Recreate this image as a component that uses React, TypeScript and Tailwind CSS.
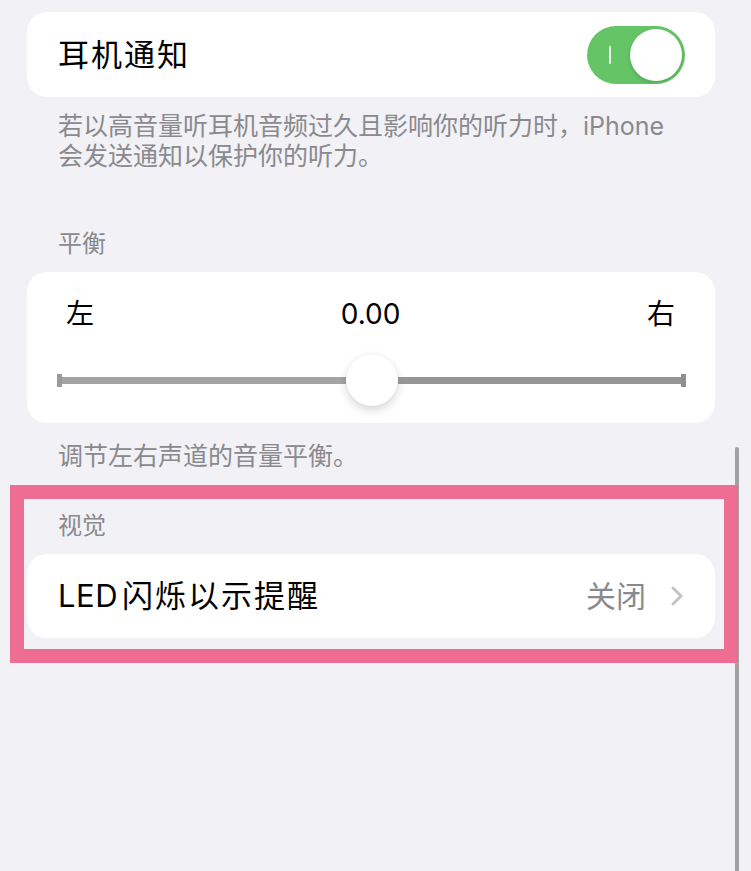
import React from "react";

const font = { fontFamily: '"Inter", "Noto Sans CJK SC", sans-serif' };

export default function App() {
  return (
    <div
      className="relative w-[751px] h-[871px] overflow-hidden bg-[#f1f1f6] text-black"
      style={font}
    >
      <div className="flex flex-col w-[688px] ml-[27px] pt-[12px]">
        {/* Card 1 */}
        <div className="flex h-[85px] items-center justify-between rounded-[20px] bg-white pl-[31px] pr-[30px]">
          <span className="text-[31px] leading-[36px] tracking-[2px]">耳机通知</span>
          <div className="relative flex h-[58px] w-[98px] items-center justify-end rounded-full bg-[#65c466] pr-[3px]">
            <div className="absolute left-[22px] top-[20px] h-[18px] w-[2px] rounded bg-white/90" />
            <div className="h-[52px] w-[52px] rounded-full bg-white shadow-[0_2px_4px_rgba(0,0,0,0.15)]" />
          </div>
        </div>
        <p className="mt-[14px] pl-[31px] text-[25px] leading-[30px] text-[#8a8a8e]">
          若以高音量听耳机音频过久且影响你的听力时，iPhone
          <br />
          会发送通知以保护你的听力。
        </p>

        <div className="mt-[58px] pl-[31px] text-[24px] leading-[30px] text-[#8a8a8e]">平衡</div>

        {/* Card 2 */}
        <div className="mt-[13px] flex h-[151px] flex-col rounded-[20px] bg-white pt-[25px]">
          <div className="flex items-center justify-between pl-[39px] pr-[40px] text-[28px] leading-[34px]">
            <span>左</span>
            <span className="text-[28px]">0.00</span>
            <span>右</span>
          </div>
          <div className="mt-[23px] flex h-[52px] items-center pl-[30px] pr-[29px]">
            <div className="h-[13px] w-[5px] bg-[#9a9a9a]" />
            <div className="h-[7px] flex-1 bg-[#a4a4a4]" />
            <div className="h-[52px] w-[52px] rounded-full bg-white shadow-[0_4px_10px_rgba(0,0,0,0.16),0_0_1px_rgba(0,0,0,0.1)]" />
            <div className="h-[7px] flex-1 bg-[#959595]" />
            <div className="h-[13px] w-[5px] bg-[#8f8f8f]" />
          </div>
        </div>
        <p className="mt-[18px] pl-[31px] text-[25px] leading-[30px] text-[#8a8a8e]">
          调节左右声道的音量平衡。
        </p>

        <div className="mt-[40px] pl-[31px] text-[24px] leading-[30px] text-[#8a8a8e]">视觉</div>

        {/* Card 3 */}
        <div className="mt-[13px] flex h-[84px] items-center justify-between rounded-[20px] bg-white pl-[31px] pr-[32px]">
          <span className="text-[31px] leading-[36px]">
            <span className="mr-[4px] tracking-[0.5px]">LED</span>
            <span className="tracking-[2px]">闪烁以示提醒</span>
          </span>
          <div className="flex items-center gap-[25px]">
            <span className="text-[30px] leading-[36px] text-[#8a8a8e]">关闭</span>
            <svg width="12" height="20" viewBox="0 0 12 20" fill="none">
              <polyline
                points="2,2 10,10 2,18"
                stroke="#c4c4c7"
                strokeWidth="3"
                strokeLinecap="round"
                strokeLinejoin="round"
              />
            </svg>
          </div>
        </div>
      </div>

      {/* Scroll indicator */}
      <div className="absolute left-[735px] top-[447px] h-[430px] w-[4px] rounded-full bg-[#a2a2a4]" />

      {/* Highlight annotation */}
      <div className="absolute left-[10px] top-[485px] h-[178px] w-[728px] border-[14px] border-[#ee6e93]" />
    </div>
  );
}
